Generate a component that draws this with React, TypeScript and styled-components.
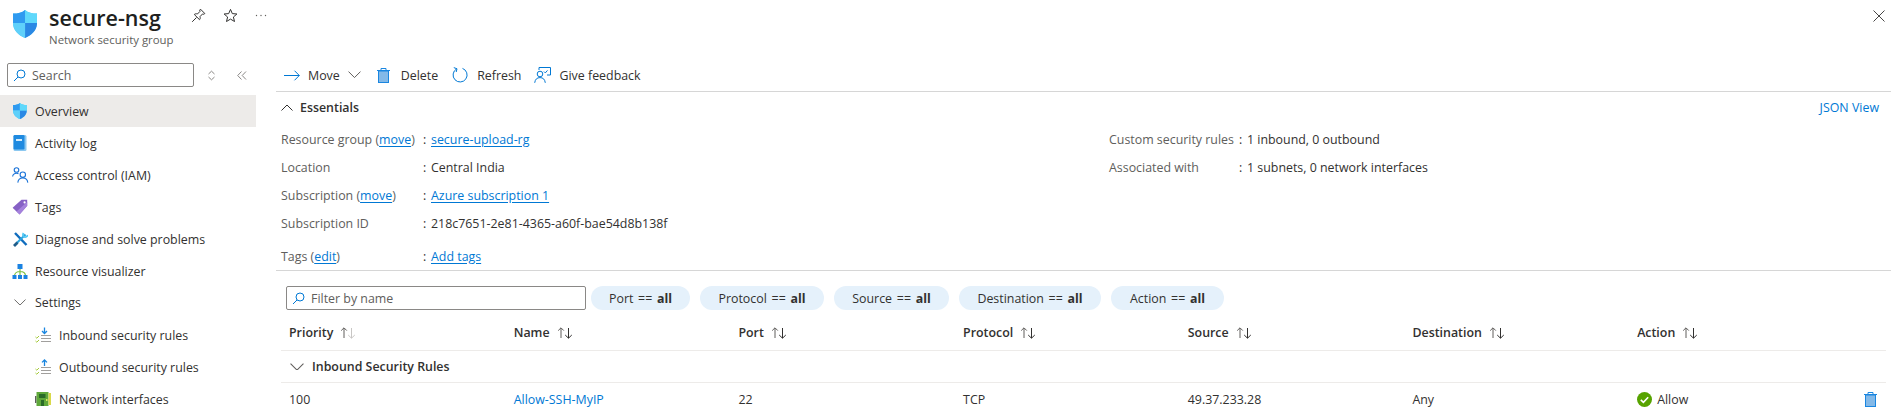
import React, { FC } from 'react';
import styled, { createGlobalStyle } from 'styled-components';

const GlobalStyle = createGlobalStyle`
	html, body {
		margin: 0;
		padding: 0;
		background: #ffffff;
	}
	body {
		font-family: 'Open Sans', 'Liberation Sans', sans-serif;
		font-size: 12.4px;
		color: #323130;
	}
	svg {
		display: block;
		flex: none;
	}
`;

const Page = styled.div`
	width: 1900px;
	height: 408px;
	overflow: hidden;
	background: #ffffff;
`;

const Header = styled.header`
	display: flex;
	align-items: flex-start;
	height: 57px;
	padding: 10px 15px 0 13px;
	box-sizing: border-box;
`;

const TitleBlock = styled.div`
	margin-left: 12px;
	margin-top: -7px;
	width: 142px;
`;

const Title = styled.h1`
	margin: 0;
	font-size: 21.5px;
	font-weight: 600;
	line-height: 30px;
	color: #201f1e;
	white-space: nowrap;
`;

const Subtitle = styled.div`
	font-size: 11.4px;
	line-height: 15px;
	color: #605e5c;
	margin-top: -1px;
`;

const HeaderActions = styled.div`
	display: flex;
	align-items: center;
	gap: 17px;
	height: 14px;
	margin-top: -2px;
`;

const CloseSlot = styled.div`
	margin-left: auto;
`;

const Body = styled.div`
	display: flex;
`;

const Sidebar = styled.nav`
	width: 256px;
	flex: none;
`;

const SearchRow = styled.div`
	display: flex;
	align-items: flex-start;
	padding: 6px 0 0 7px;
	height: 38px;
	box-sizing: border-box;
`;

const SearchBox = styled.div`
	display: flex;
	align-items: center;
	gap: 6px;
	box-sizing: border-box;
	width: 187px;
	height: 24px;
	padding-left: 5px;
	border: 1px solid #8a8886;
	border-radius: 2px;
	color: #605e5c;
`;

const SidebarTools = styled.div`
	display: flex;
	align-items: center;
	gap: 21px;
	height: 24px;
	margin-left: 13px;
`;

const NavItem = styled.div<{ $active?: boolean; $child?: boolean; $section?: boolean }>`
	display: flex;
	align-items: center;
	gap: ${({ $child }) => ($child ? '8px' : '7px')};
	height: ${({ $section }) => ($section ? '30px' : '32px')};
	margin-bottom: ${({ $section }) => ($section ? '2px' : '0')};
	padding-left: ${({ $child }) => ($child ? '35px' : '12px')};
	background: ${({ $active }) => ($active ? '#edebe9' : 'transparent')};
	white-space: nowrap;
`;

const IconSlot = styled.span`
	display: flex;
	align-items: center;
	justify-content: center;
	width: 16px;
`;

const Main = styled.main`
	width: 1615px;
	margin-left: 20px;
	flex: none;
`;

const Toolbar = styled.div`
	display: flex;
	align-items: center;
	height: 36px;
	margin-top: -1px;
	padding: 3px 0 0 8px;
	border-bottom: 1px solid #d6d6d6;
	box-sizing: border-box;
`;

const ToolButton = styled.div<{ $gap: number; $after: number }>`
	display: flex;
	align-items: center;
	gap: ${({ $gap }) => $gap}px;
	margin-right: ${({ $after }) => $after}px;
	white-space: nowrap;
`;

const EssentialsBar = styled.div`
	display: flex;
	align-items: center;
	justify-content: space-between;
	height: 30px;
	padding: 0 12px 0 5px;
`;

const EssentialsTitle = styled.div`
	display: flex;
	align-items: center;
	gap: 7px;
	font-weight: 600;
`;

const Essentials = styled.section`
	display: grid;
	grid-template-columns: 828px 1fr;
	height: 149px;
	padding: 3px 0 0 5px;
	box-sizing: border-box;
	border-bottom: 1px solid #d6d6d6;
`;

const InfoColumn = styled.div`
	display: flex;
	flex-direction: column;
`;

const InfoRow = styled.div<{ $labelWidth: number; $tall?: boolean }>`
	display: grid;
	grid-template-columns: ${({ $labelWidth }) => $labelWidth}px 8px 1fr;
	height: ${({ $tall }) => ($tall ? '38px' : '28px')};
	align-items: center;
	box-sizing: border-box;
	white-space: nowrap;
`;

const Label = styled.span`
	color: #605e5c;
`;

const A = styled.span`
	color: #0078d4;
`;

const LinkValue = styled.span`
	color: #0078d4;
	text-decoration: underline;
	text-underline-offset: 2px;
`;

const FilterBar = styled.div`
	display: flex;
	align-items: flex-start;
	gap: 5px;
	height: 40px;
	padding: 15px 0 0 10px;
	box-sizing: border-box;
`;

const FilterBox = styled.div`
	display: flex;
	align-items: center;
	gap: 6px;
	box-sizing: border-box;
	width: 300px;
	height: 24px;
	padding-left: 5px;
	border: 1px solid #8a8886;
	border-radius: 2px;
	color: #605e5c;
`;

const PillGroup = styled.div`
	display: flex;
	gap: 10px;
`;

const Pill = styled.div<{ $width: number }>`
	display: flex;
	align-items: center;
	justify-content: center;
	box-sizing: border-box;
	width: ${({ $width }) => $width}px;
	height: 24px;
	border-radius: 12px;
	background: #e5f1fb;
	white-space: pre;
	word-spacing: 1.5px;
	b {
		font-weight: 700;
	}
`;

const Table = styled.div`
	width: 1605px;
	margin-left: 5px;
`;

const TableRow = styled.div<{ $height: number; $head?: boolean }>`
	position: relative;
	display: grid;
	grid-template-columns: repeat(6, 224.7px) 1fr;
	align-items: center;
	height: ${({ $height }) => $height}px;
	padding: ${({ $head }) => ($head ? '4px' : '0')} 0 0 8px;
	box-sizing: border-box;
	border-bottom: 1px solid #edebe9;
	font-weight: ${({ $head }) => ($head ? 600 : 400)};
	white-space: nowrap;
`;

const HeadCell = styled.div`
	display: flex;
	align-items: center;
	gap: 7px;
`;

const GroupRow = styled.div`
	display: flex;
	align-items: center;
	gap: 8px;
	height: 32px;
	padding-left: 9px;
	box-sizing: border-box;
	border-bottom: 1px solid #edebe9;
	font-weight: 600;
`;

const ActionCell = styled.div`
	display: flex;
	align-items: center;
	gap: 5px;
`;

const RowDelete = styled.div`
	position: absolute;
	right: 9px;
	top: 9px;
`;

const ShieldIcon: FC<{ size: number }> = ({ size }) => (
	<svg width={size * 0.86} height={size} viewBox="0 0 24 28">
		<path d="M12 0C15 2.6 19 3.6 24 3.6V13C24 20 19 25 12 28C5 25 0 20 0 13V3.6C5 3.6 9 2.6 12 0Z" fill="#50c8f5" />
		<path d="M12 0C9 2.6 5 3.6 0 3.6V13H12Z" fill="#2f9af0" />
		<path d="M12 13H24C24 20 19 25 12 28Z" fill="#2b88e4" />
		<path d="M12 0C15 2.6 19 3.6 24 3.6V13H12Z" fill="#5fd8fb" />
		<path d="M0 13H12V28C5 25 0 20 0 13Z" fill="#5fd0fa" />
	</svg>
);

const PinIcon = () => (
	<svg width="15" height="15" viewBox="0 0 15 15" fill="none" stroke="#323130" strokeWidth="1">
		<path d="M9.5 1.2L13.8 5.5L12.8 6.3L11.6 5.9L9 8.6C9.5 10 9.2 11 8.5 11.7L3.3 6.5C4 5.8 5.2 5.5 6.4 6L9 3.4L8.7 2.1Z" />
		<path d="M5.5 9.5L1.2 13.8" />
	</svg>
);

const StarIcon = () => (
	<svg width="15" height="15" viewBox="0 0 15 15" fill="none" stroke="#323130" strokeWidth="1">
		<path d="M7.5 1.4L9.3 5.6L13.9 6L10.4 9L11.5 13.5L7.5 11.1L3.5 13.5L4.6 9L1.1 6L5.7 5.6Z" />
	</svg>
);

const MoreIcon = () => (
	<svg width="12" height="3" viewBox="0 0 12 3" fill="#605e5c">
		<circle cx="1.5" cy="1.5" r="0.7" />
		<circle cx="6" cy="1.5" r="0.7" />
		<circle cx="10.5" cy="1.5" r="0.7" />
	</svg>
);

const CloseIcon = () => (
	<svg width="12" height="12" viewBox="0 0 12 12" stroke="#323130" strokeWidth="0.9">
		<path d="M0.5 0.5L11.5 11.5M11.5 0.5L0.5 11.5" />
	</svg>
);

const SearchIcon = () => (
	<svg width="13" height="13" viewBox="0 0 13 13" fill="none" stroke="#0078d4" strokeWidth="1">
		<circle cx="8" cy="5" r="4" />
		<path d="M5 8L1 12" />
	</svg>
);

const SortToggleIcon = () => (
	<svg width="9" height="11" viewBox="0 0 9 11" fill="none" stroke="#8a8886" strokeWidth="1">
		<path d="M1.5 4L4.5 1.2L7.5 4M1.5 7L4.5 9.8L7.5 7" />
	</svg>
);

const CollapseIcon = () => (
	<svg width="10" height="9" viewBox="0 0 10 9" fill="none" stroke="#8a8886" strokeWidth="1">
		<path d="M4.5 0.5L0.7 4.5L4.5 8.5M9 0.5L5.2 4.5L9 8.5" />
	</svg>
);

const OverviewShield = () => <ShieldIcon size={16} />;

const BookIcon = () => (
	<svg width="14" height="16" viewBox="0 0 14 16">
		<rect x="0.5" y="0" width="13" height="16" rx="1.5" fill="#8cc8f0" />
		<rect x="0.5" y="0" width="11" height="14.5" rx="1.2" fill="#1f8ae0" />
		<rect x="3" y="4" width="6" height="2" fill="#d5ecfb" />
	</svg>
);

const PeopleIcon = () => (
	<svg width="17" height="16" viewBox="0 0 17 16" fill="none" stroke="#1a73d8" strokeWidth="1.1">
		<circle cx="4.5" cy="3" r="2.3" />
		<path d="M0.6 9.5C1 7.3 2.5 6.3 4.6 6.3C5.3 6.3 5.9 6.4 6.5 6.7" />
		<circle cx="10.8" cy="7.7" r="2.7" />
		<path d="M5.8 15.6C6.2 12.5 8 11 10.8 11C13.6 11 15.4 12.5 15.8 15.6" />
	</svg>
);

const TagIcon = () => (
	<svg width="16" height="16" viewBox="0 0 16 16">
		<path d="M9.5 0.8H15.2V6.8L7.6 15.4L0.6 8.8Z" fill="#8661c5" />
		<path d="M15.2 3V6.8L7.6 15.4L4.5 12.4Z" fill="#a582dc" />
		<circle cx="12.6" cy="3.4" r="1.1" fill="#ffffff" />
	</svg>
);

const ToolsIcon = () => (
	<svg width="15" height="15" viewBox="0 0 15 15" fill="none">
		<path d="M2 1L13.5 13" stroke="#0f6cbd" strokeWidth="2.4" />
		<path d="M12.5 2.5L3.5 11.2" stroke="#2ba3de" strokeWidth="2" />
		<path d="M1 14L4.5 10.5" stroke="#1f5d8a" strokeWidth="2.8" />
		<path d="M10.5 1C9.5 3 10 4.5 11.5 5C13 5.3 14.2 4.5 14.8 3" stroke="#50c8f5" strokeWidth="1.8" />
	</svg>
);

const TreeIcon = () => (
	<svg width="16" height="15" viewBox="0 0 16 15" fill="none">
		<path d="M2.5 12C2.5 9 5 7.5 8 7.5C11 7.5 13.5 9 13.5 12M8 5V12" stroke="#7cc142" strokeWidth="1.2" />
		<rect x="5.5" y="0" width="5" height="5" fill="#1a82e2" />
		<rect x="0.5" y="11" width="4" height="4" fill="#1a82e2" />
		<rect x="6" y="11" width="4" height="4" fill="#1a82e2" />
		<rect x="11.5" y="11" width="4" height="4" fill="#1a82e2" />
	</svg>
);

const ChevronDown: FC<{ width?: number; color?: string }> = ({ width = 13, color = '#605e5c' }) => (
	<svg width={width} height={width * 0.55} viewBox="0 0 13 7" fill="none" stroke={color} strokeWidth="1">
		<path d="M0.5 0.5L6.5 6.5L12.5 0.5" />
	</svg>
);

const RulesIcon: FC<{ up?: boolean }> = ({ up }) => (
	<svg width="16" height="16" viewBox="0 0 16 16" fill="none">
		<path d={up ? 'M9.5 7V1.2M7 3.4L9.5 1L12 3.4' : 'M9.5 0.5V6.3M7 4L9.5 6.5L12 4'} stroke="#1a86e0" strokeWidth="1.3" />
		<path d="M6 8.5H16M6 11.5H16M6 14.5H16" stroke="#a19f9d" strokeWidth="1" />
		<path d="M0.5 10L1.8 11.2L4 9M0.5 14L1.8 15.2L4 13" stroke="#a4c93a" strokeWidth="1" />
	</svg>
);

const NicIcon = () => (
	<svg width="16" height="16" viewBox="0 0 16 16">
		<rect x="0" y="5" width="1.5" height="7" fill="#5e5e5e" />
		<rect x="1.5" y="1" width="12" height="14" fill="#5fa83a" />
		<rect x="13.5" y="2" width="2.5" height="12" fill="#d9d94a" />
		<rect x="4" y="3" width="6.5" height="4" fill="#2a6b28" />
		<rect x="6" y="9" width="3" height="6" fill="#2a6b28" />
		<rect x="11" y="8" width="1.5" height="2" fill="#d9e85a" />
	</svg>
);

const ArrowRightIcon = () => (
	<svg width="16" height="11" viewBox="0 0 16 11" fill="none" stroke="#0078d4" strokeWidth="1">
		<path d="M0 5.5H15.3M10.5 0.7L15.3 5.5L10.5 10.3" />
	</svg>
);

const TrashIcon = () => (
	<svg width="13" height="15" viewBox="0 0 13 15">
		<rect x="1.5" y="3" width="10" height="11.5" fill="#83b9e8" stroke="#1a86e0" strokeWidth="1" />
		<path d="M0 2.5H13M4 2.5V0.5H9V2.5" fill="none" stroke="#1a86e0" strokeWidth="1" />
	</svg>
);

const RefreshIcon = () => (
	<svg width="16" height="16" viewBox="0 0 16 16" fill="none" stroke="#0078d4" strokeWidth="1">
		<path d="M10.5 1.4A7 7 0 1 1 4.6 1.9" />
		<path d="M1.8 0.6L5 1.8L4.2 5" />
	</svg>
);

const FeedbackIcon = () => (
	<svg width="17" height="16" viewBox="0 0 17 16" fill="none" stroke="#0078d4" strokeWidth="1">
		<path d="M5 3V0.5H16.5V8H13" />
		<path d="M10 4.6L11.3 5.9L13.5 3.4" />
		<circle cx="6" cy="7" r="2.8" />
		<path d="M0.7 15.8C1.2 12.2 3 10.6 6 10.6C9 10.6 10.8 12.2 11.3 15.8" />
	</svg>
);

const ChevronUp = () => (
	<svg width="12" height="7" viewBox="0 0 12 7" fill="none" stroke="#323130" strokeWidth="1">
		<path d="M0.5 6.5L6 1L11.5 6.5" />
	</svg>
);

const SortArrows: FC<{ faded?: boolean }> = ({ faded }) => (
	<svg width="16" height="12" viewBox="0 0 16 12" fill="none" strokeWidth="1">
		<path d="M4 11V1M1.2 3.6L4 0.8L6.8 3.6" stroke="#605e5c" />
		<path d="M11.5 1V11M8.2 8L11.5 11.2L14.8 8" stroke={faded ? '#c8c6c4' : '#323130'} />
	</svg>
);

const CheckCircle = () => (
	<svg width="15" height="15" viewBox="0 0 15 15">
		<circle cx="7.5" cy="7.5" r="7.5" fill="#57a300" />
		<path d="M3.8 7.8L6.4 10.3L11.2 5.2" fill="none" stroke="#ffffff" strokeWidth="1.6" />
	</svg>
);

const navItems: Array<{ label: string; icon: React.ReactNode; active?: boolean; child?: boolean; section?: boolean }> = [
	{ label: 'Overview', icon: <OverviewShield />, active: true },
	{ label: 'Activity log', icon: <BookIcon /> },
	{ label: 'Access control (IAM)', icon: <PeopleIcon /> },
	{ label: 'Tags', icon: <TagIcon /> },
	{ label: 'Diagnose and solve problems', icon: <ToolsIcon /> },
	{ label: 'Resource visualizer', icon: <TreeIcon /> },
	{ label: 'Settings', icon: <ChevronDown width={12} />, section: true },
	{ label: 'Inbound security rules', icon: <RulesIcon />, child: true },
	{ label: 'Outbound security rules', icon: <RulesIcon up />, child: true },
	{ label: 'Network interfaces', icon: <NicIcon />, child: true },
];

const pills = [
	{ name: 'Port', width: 99 },
	{ name: 'Protocol', width: 124 },
	{ name: 'Source', width: 115 },
	{ name: 'Destination', width: 142 },
	{ name: 'Action', width: 113 },
];

const columns = ['Priority', 'Name', 'Port', 'Protocol', 'Source', 'Destination', 'Action'];

const App: FC = () => (
	<Page>
		<GlobalStyle />
		<Header>
			<ShieldIcon size={28} />
			<TitleBlock>
				<Title>secure-nsg</Title>
				<Subtitle>Network security group</Subtitle>
			</TitleBlock>
			<HeaderActions>
				<PinIcon />
				<StarIcon />
				<MoreIcon />
			</HeaderActions>
			<CloseSlot>
				<CloseIcon />
			</CloseSlot>
		</Header>
		<Body>
			<Sidebar>
				<SearchRow>
					<SearchBox>
						<SearchIcon />
						Search
					</SearchBox>
					<SidebarTools>
						<SortToggleIcon />
						<CollapseIcon />
					</SidebarTools>
				</SearchRow>
				{navItems.map((item) => (
					<NavItem key={item.label} $active={item.active} $child={item.child} $section={item.section}>
						<IconSlot>{item.icon}</IconSlot>
						{item.label}
					</NavItem>
				))}
			</Sidebar>
			<Main>
				<Toolbar>
					<ToolButton $gap={8} $after={16}>
						<ArrowRightIcon />
						Move
						<ChevronDown />
					</ToolButton>
					<ToolButton $gap={11} $after={14}>
						<TrashIcon />
						Delete
					</ToolButton>
					<ToolButton $gap={9} $after={13}>
						<RefreshIcon />
						Refresh
					</ToolButton>
					<ToolButton $gap={8} $after={0}>
						<FeedbackIcon />
						Give feedback
					</ToolButton>
				</Toolbar>
				<EssentialsBar>
					<EssentialsTitle>
						<ChevronUp />
						Essentials
					</EssentialsTitle>
					<A>JSON View</A>
				</EssentialsBar>
				<Essentials>
					<InfoColumn>
						<InfoRow $labelWidth={142}>
							<Label>
								Resource group (<LinkValue>move</LinkValue>)
							</Label>
							<span>:</span>
							<LinkValue>secure-upload-rg</LinkValue>
						</InfoRow>
						<InfoRow $labelWidth={142}>
							<Label>Location</Label>
							<span>:</span>
							<span>Central India</span>
						</InfoRow>
						<InfoRow $labelWidth={142}>
							<Label>
								Subscription (<LinkValue>move</LinkValue>)
							</Label>
							<span>:</span>
							<LinkValue>Azure subscription 1</LinkValue>
						</InfoRow>
						<InfoRow $labelWidth={142}>
							<Label>Subscription ID</Label>
							<span>:</span>
							<span>218c7651-2e81-4365-a60f-bae54d8b138f</span>
						</InfoRow>
						<InfoRow $labelWidth={142} $tall>
							<Label>
								Tags (<LinkValue>edit</LinkValue>)
							</Label>
							<span>:</span>
							<LinkValue>Add tags</LinkValue>
						</InfoRow>
					</InfoColumn>
					<InfoColumn>
						<InfoRow $labelWidth={130}>
							<Label>Custom security rules</Label>
							<span>:</span>
							<span>1 inbound, 0 outbound</span>
						</InfoRow>
						<InfoRow $labelWidth={130}>
							<Label>Associated with</Label>
							<span>:</span>
							<span>1 subnets, 0 network interfaces</span>
						</InfoRow>
					</InfoColumn>
				</Essentials>
				<FilterBar>
					<FilterBox>
						<SearchIcon />
						Filter by name
					</FilterBox>
					<PillGroup>
						{pills.map((pill) => (
							<Pill key={pill.name} $width={pill.width}>
								{pill.name} == <b>all</b>
							</Pill>
						))}
					</PillGroup>
				</FilterBar>
				<Table>
					<TableRow $height={40} $head>
						{columns.map((column) => (
							<HeadCell key={column}>
								{column}
								<SortArrows faded={column === 'Priority'} />
							</HeadCell>
						))}
					</TableRow>
					<GroupRow>
						<ChevronDown width={14} />
						Inbound Security Rules
					</GroupRow>
					<TableRow $height={34}>
						<span>100</span>
						<A>Allow-SSH-MyIP</A>
						<span>22</span>
						<span>TCP</span>
						<span>49.37.233.28</span>
						<span>Any</span>
						<ActionCell>
							<CheckCircle />
							Allow
						</ActionCell>
						<RowDelete>
							<TrashIcon />
						</RowDelete>
					</TableRow>
				</Table>
			</Main>
		</Body>
	</Page>
);

export default App;
